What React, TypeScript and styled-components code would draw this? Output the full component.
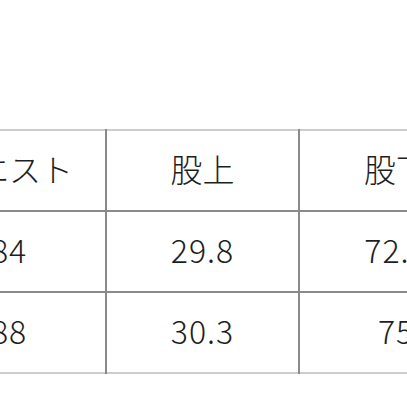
import React from "react";
import styled, { createGlobalStyle } from "styled-components";

const GlobalStyle = createGlobalStyle`
  html, body {
    margin: 0;
    padding: 0;
    background: #ffffff;
  }
  body {
    font-family: "Noto Sans CJK JP", "Noto Sans", sans-serif;
  }
`;

const Viewport = styled.div`
  width: 407px;
  height: 407px;
  overflow: hidden;
  background: #ffffff;
  padding-top: 129px;
  box-sizing: border-box;
`;

const Table = styled.table`
  border-collapse: collapse;
  margin-left: -87px;
  table-layout: fixed;
  width: 579px;
  font-family: "Noto Sans CJK JP", "Noto Sans", sans-serif;
  color: #1e1e1e;
`;

const Col = styled.col`
  width: 193px;
`;

const Row = styled.tr<{ $edge?: "top" | "bottom" }>`
  height: 81px;
  border-top: 2px solid ${(p) => (p.$edge === "top" ? "#cdcdcd" : "#8a8a8a")};
  ${(p) => (p.$edge === "bottom" ? "border-bottom: 2px solid #cdcdcd;" : "")}
`;

const Cell = styled.td<{ $num?: boolean }>`
  padding: 0 0 ${(p) => (p.$num ? "5px" : "6px")} 0;
  text-align: center;
  vertical-align: middle;
  font-size: 32px;
  font-weight: 300;
  line-height: 1;
  letter-spacing: ${(p) => (p.$num ? "1px" : "0")};
  border-left: 2px solid #8a8a8a;
  &:first-child {
    border-left: none;
  }
`;

const rows = [
  ["ウエスト", "股上", "股下"],
  ["84", "29.8", "72.5"],
  ["88", "30.3", "75"],
];

export default function App() {
  return (
    <>
      <GlobalStyle />
      <Viewport>
        <Table>
          <colgroup>
            <Col />
            <Col />
            <Col />
          </colgroup>
          <tbody>
            {rows.map((r, i) => (
              <Row key={i} $edge={i === 0 ? "top" : i === rows.length - 1 ? "bottom" : undefined}>
                {r.map((c, j) => (
                  <Cell key={j} $num={i > 0}>
                    {c}
                  </Cell>
                ))}
              </Row>
            ))}
          </tbody>
        </Table>
      </Viewport>
    </>
  );
}
